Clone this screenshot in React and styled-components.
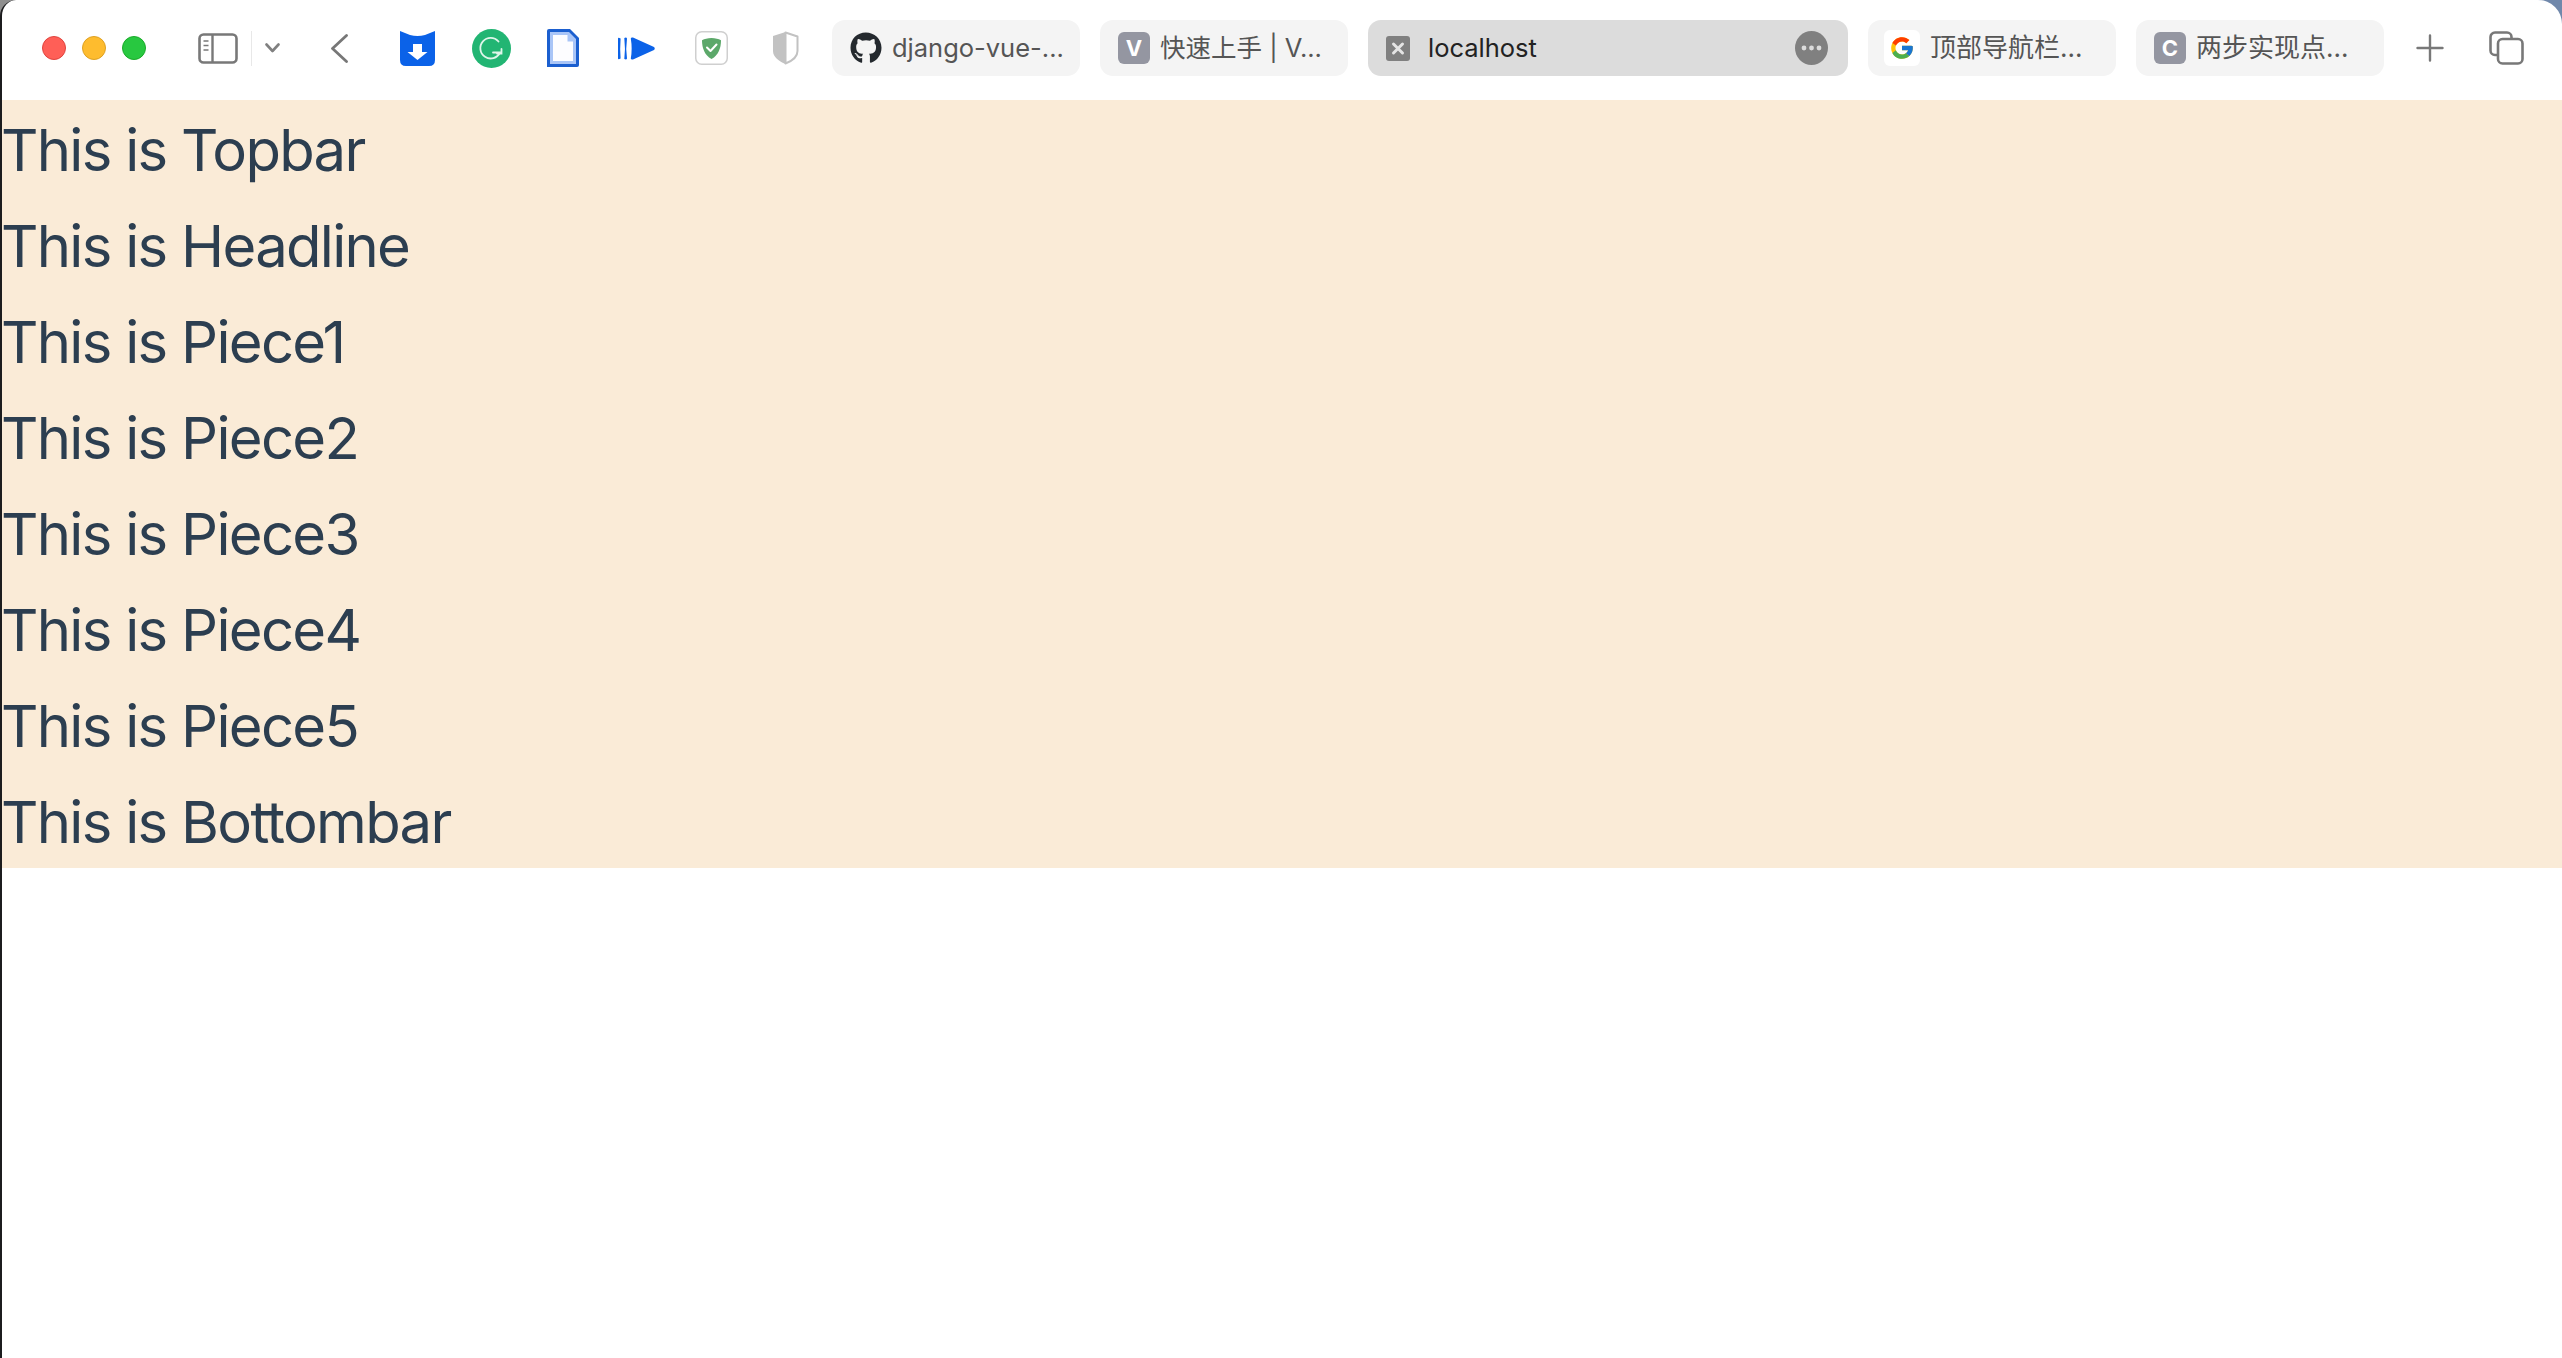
import React from 'react';
import styled, { createGlobalStyle } from 'styled-components';
import { FaGithub } from 'react-icons/fa';
import { FcGoogle } from 'react-icons/fc';

const GlobalStyle = createGlobalStyle`
  html, body {
    margin: 0;
    padding: 0;
    background: linear-gradient(to right, #8f8f8f 50%, #7088ab 50%);
  }
`;

const Window = styled.div`
  min-height: 100vh;
  box-sizing: border-box;
  background: #fff;
  border-left: 2px solid #1c1c1e;
  border-radius: 16px 24px 0 0;
  overflow: hidden;
  font-family: Inter, "Noto Sans CJK SC", sans-serif;
`;

const Toolbar = styled.div`
  height: 100px;
  display: flex;
  align-items: center;
  padding-left: 40px;
  padding-bottom: 4px;
  box-sizing: border-box;
`;

const Lights = styled.div`
  display: flex;
  gap: 16px;
  margin-right: 52px;
`;

const Light = styled.span`
  width: 24px;
  height: 24px;
  box-sizing: border-box;
  border-radius: 50%;
  background: ${p => p.$color};
  border: 1px solid ${p => p.$edge};
`;

const Divider = styled.span`
  width: 1px;
  height: 35px;
  background: #e8e8e8;
  margin: 0 13px;
`;

const BackButton = styled.span`
  display: flex;
  margin: 0 33px 0 51px;
`;

const Extensions = styled.div`
  display: flex;
`;

const ExtensionSlot = styled.span`
  width: 73.6px;
  box-sizing: border-box;
  padding-right: ${p => p.$nudge || 0}px;
  display: flex;
  justify-content: center;
  align-items: center;
`;

const Tabs = styled.div`
  display: flex;
  gap: 20px;
  margin-left: 9.4px;
`;

const Tab = styled.div`
  width: ${p => (p.$active ? '480px' : '248px')};
  height: 56px;
  box-sizing: border-box;
  padding: 0 20px 0 18px;
  display: flex;
  align-items: center;
  gap: ${p => (p.$active ? '18px' : '10px')};
  border-radius: 13px;
  background: ${p => (p.$active ? '#dcdcdc' : '#f4f4f4')};
  color: ${p => (p.$active ? '#222' : '#555')};
  font-size: ${p => (p.$cjk ? '26px' : '25.5px')};
  line-height: 32px;
  white-space: nowrap;
`;

const LetterTile = styled.span`
  width: 32px;
  height: 32px;
  flex: none;
  display: flex;
  align-items: center;
  justify-content: center;
  border-radius: 6px;
  background: #9496a1;
  color: #fff;
  font-size: 22px;
  font-weight: 700;
`;

const GoogleTile = styled.span`
  width: 36px;
  height: 36px;
  flex: none;
  margin-left: -2px;
  display: flex;
  align-items: center;
  justify-content: center;
  border-radius: 6px;
  background: #fff;
`;

const MoreButton = styled.span`
  margin-left: auto;
  display: flex;
`;

const ToolButton = styled.span`
  display: flex;
  margin-left: ${p => p.$gap}px;
`;

const Content = styled.div`
  background: antiquewhite;
  color: #2c3e50;
`;

const Row = styled.div`
  height: 96px;
  line-height: 100px;
  font-size: 58px;
  font-weight: 400;
  letter-spacing: -1.7px;
  text-indent: -1px;
  white-space: nowrap;
`;

const SidebarIcon = () => (
  <svg width="40" height="31" viewBox="0 0 40 31" fill="none" stroke="#787878">
    <rect x="1.5" y="1.5" width="37" height="28" rx="4" strokeWidth="2.6" />
    <path d="M14.5 2v27" strokeWidth="2.4" />
    <path d="M5.5 8h5M5.5 12.5h5M5.5 17h5" strokeWidth="1.6" />
  </svg>
);

const ChevronDown = () => (
  <svg width="15" height="10" viewBox="0 0 15 10" fill="none" stroke="#808080" strokeWidth="2.6" strokeLinecap="round" strokeLinejoin="round">
    <path d="M1.5 1.5 7.5 8l6-6.5" />
  </svg>
);

const ChevronLeft = () => (
  <svg width="17" height="29" viewBox="0 0 17 29" fill="none" stroke="#777" strokeWidth="2.8" strokeLinecap="round" strokeLinejoin="round">
    <path d="M15.5 1.5 1.5 14.5l14 13" />
  </svg>
);

const CatIcon = () => (
  <svg width="35" height="35" viewBox="0 0 35 35">
    <path d="M0 0 10 4Q17.5 6 25 4L35 0V29Q35 35 29 35H6Q0 35 0 29Z" fill="#0b62e8" />
    <path d="M13 13h9v8h5.5L17.5 29 7.5 21H13Z" fill="#fff" />
  </svg>
);

const GrammarlyIcon = () => (
  <svg width="39" height="39" viewBox="0 0 39 39" fill="none">
    <circle cx="19.5" cy="19.5" r="19.5" fill="#22b573" />
    <path d="M26.5 12.5A10.3 10.3 0 1 0 28 23.5H21" stroke="#dff5ea" strokeWidth="1.8" strokeLinecap="round" />
    <path d="M29.5 20v4.5H25" stroke="#dff5ea" strokeWidth="1.8" strokeLinecap="round" />
  </svg>
);

const DocIcon = () => (
  <svg width="32" height="38" viewBox="0 0 32 38">
    <path d="M2 0H23L32 9V36Q32 38 30 38H0V2Q0 0 2 0Z" fill="#1b5fcf" />
    <path d="M3 3H22L29 10V35H3Z" fill="#a9c5f7" />
    <path d="M6 6H20.5V12.5H26V32H6Z" fill="#fdfdff" />
  </svg>
);

const PlayIcon = () => (
  <svg width="37" height="23" viewBox="0 0 37 23" fill="#0b62e8">
    <path d="M0 1.5Q0 .5 1.5 1L2.6 1.5Q1.8 11.5 2.6 21.5L1.5 22Q0 22.5 0 21.5Z" />
    <path d="M6.3 1Q8.5 0 9 1.5 7.5 11.5 9 21.5 8.5 23 6.3 22 7.6 11.5 6.3 1Z" />
    <path d="M12.8 1.5Q13 0 15 .6L36 10Q37.5 11.5 36 13L15 22.4Q13 23 12.8 21.5 14.5 11.5 12.8 1.5Z" />
  </svg>
);

const AdguardIcon = () => (
  <svg width="33" height="34" viewBox="0 0 33 34" fill="none">
    <rect x="0.75" y="0.75" width="31.5" height="32.5" rx="6" fill="#fff" stroke="#cfcfcf" strokeWidth="1.5" />
    <path d="M16.5 7C12.5 7 9.5 8 7 9.2 7 17 9.5 24 16.5 28 23.5 24 26 17 26 9.2 23.5 8 20.5 7 16.5 7Z" fill="#5ca86a" />
    <path d="M12 16.5l3.5 3.5 6-6.5" stroke="#fff" strokeWidth="2" strokeLinecap="round" strokeLinejoin="round" />
  </svg>
);

const ShieldIcon = () => (
  <svg width="27" height="34" viewBox="0 0 27 34" fill="none">
    <path d="M13.5 1.5 25.5 5.5V20C25.5 26 20 30 13.5 32.5Z" stroke="#c2c2c2" strokeWidth="2" strokeLinejoin="round" />
    <path d="M13.5 1 1 5V20C1 26 7 30.5 13.5 33Z" fill="#c2c2c2" />
  </svg>
);

const CloseTile = () => (
  <svg width="24" height="25" viewBox="0 0 24 25" style={{ flex: 'none' }}>
    <rect width="24" height="25" rx="3" fill="#808080" />
    <path d="M7.5 8 16.5 17M16.5 8 7.5 17" stroke="#e4e4e4" strokeWidth="3" strokeLinecap="round" />
  </svg>
);

const MoreIcon = () => (
  <svg width="33" height="34" viewBox="0 0 33 34">
    <ellipse cx="16.5" cy="17" rx="16.5" ry="17" fill="#808080" />
    <g fill="#dcdcdc">
      <circle cx="9" cy="17" r="2.4" />
      <circle cx="16.5" cy="17" r="2.4" />
      <circle cx="24" cy="17" r="2.4" />
    </g>
  </svg>
);

const PlusIcon = () => (
  <svg width="28" height="28" viewBox="0 0 28 28" stroke="#787878" strokeWidth="2.4" strokeLinecap="round">
    <path d="M14 1.5v25M1.5 14h25" />
  </svg>
);

const CopyIcon = () => (
  <svg width="35" height="34" viewBox="0 0 35 34" fill="none" stroke="#787878" strokeWidth="2.6">
    <path d="M8 24H6a4.5 4.5 0 0 1-4.5-4.5V6A4.5 4.5 0 0 1 6 1.5h12A4.5 4.5 0 0 1 22.5 6v2" />
    <rect x="9" y="8" width="24.5" height="24.5" rx="4.5" />
  </svg>
);

const rows = ['Topbar', 'Headline', 'Piece1', 'Piece2', 'Piece3', 'Piece4', 'Piece5', 'Bottombar'];

const App = () => {
  return (
    <Window>
      <GlobalStyle />
      <Toolbar>
        <Lights>
          <Light $color="#ff5f57" $edge="#e0443e" />
          <Light $color="#febc2e" $edge="#dea123" />
          <Light $color="#28c840" $edge="#1aab29" />
        </Lights>
        <SidebarIcon />
        <Divider />
        <ChevronDown />
        <BackButton><ChevronLeft /></BackButton>
        <Extensions>
          <ExtensionSlot><CatIcon /></ExtensionSlot>
          <ExtensionSlot><GrammarlyIcon /></ExtensionSlot>
          <ExtensionSlot $nudge={4}><DocIcon /></ExtensionSlot>
          <ExtensionSlot $nudge={4}><PlayIcon /></ExtensionSlot>
          <ExtensionSlot $nudge={2}><AdguardIcon /></ExtensionSlot>
          <ExtensionSlot><ShieldIcon /></ExtensionSlot>
        </Extensions>
        <Tabs>
          <Tab><FaGithub size={32} color="#24292e" style={{ flex: 'none' }} />django-vue-...</Tab>
          <Tab><LetterTile>V</LetterTile>快速上手 | V...</Tab>
          <Tab $active><CloseTile />localhost<MoreButton><MoreIcon /></MoreButton></Tab>
          <Tab $cjk><GoogleTile><FcGoogle size={26} /></GoogleTile>顶部导航栏...</Tab>
          <Tab $cjk><LetterTile>C</LetterTile>两步实现点...</Tab>
        </Tabs>
        <ToolButton $gap={32}><PlusIcon /></ToolButton>
        <ToolButton $gap={45}><CopyIcon /></ToolButton>
      </Toolbar>
      <Content>
        {rows.map(name => <Row key={name}>This is {name}</Row>)}
      </Content>
    </Window>
  );
};

export default App;
